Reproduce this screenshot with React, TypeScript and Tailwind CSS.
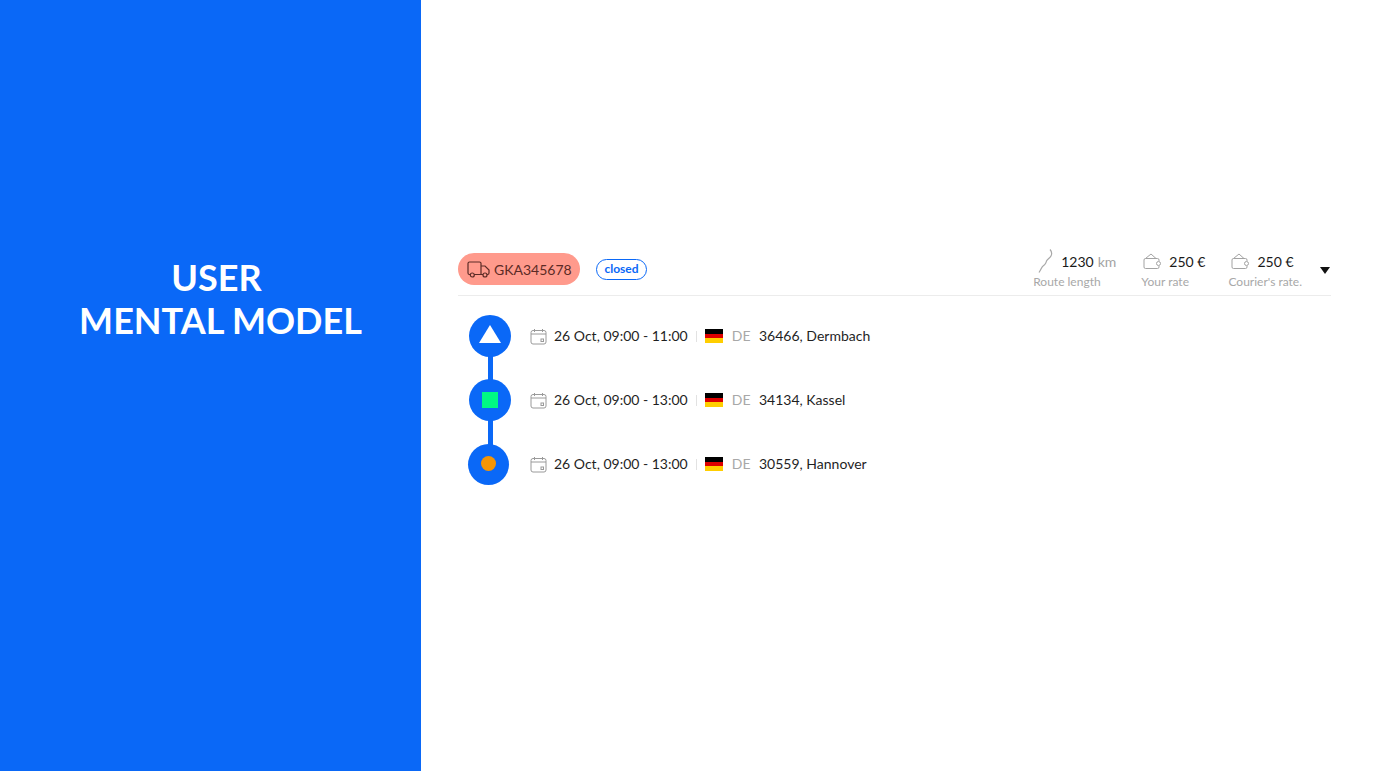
import React from "react";

const stops = [
  { time: "26 Oct, 09:00 - 11:00", city: "36466, Dermbach", shape: "triangle" },
  { time: "26 Oct, 09:00 - 13:00", city: "34134, Kassel", shape: "square" },
  { time: "26 Oct, 09:00 - 13:00", city: "30559, Hannover", shape: "dot" },
];

function CalendarIcon() {
  return (
    <svg className="mt-[2px]" width="17" height="17" viewBox="0 0 17 17" fill="none" stroke="#9a9a9a" strokeWidth="1">
      <rect x="1" y="2.5" width="15" height="13.5" rx="2" />
      <path d="M1 6h15M4.5 1v3M12.5 1v3" />
      <rect x="11" y="11" width="2.5" height="2.5" />
    </svg>
  );
}

function WalletIcon() {
  return (
    <svg width="19" height="17" viewBox="0 0 19 17" fill="none" stroke="#a3a3a3" strokeWidth="1">
      <path d="M2.5 5.500 8 1l5 4.500" />
      <path d="M16 8V7A1.500 1.500 0 0 0 14.500 5.500h-12A1.500 1.500 0 0 0 1 7v7a1.500 1.500 0 0 0 1.500 1.500h12A1.500 1.500 0 0 0 16 14v-1" />
      <circle cx="15.500" cy="10.500" r="2" />
    </svg>
  );
}

function TruckIcon() {
  return (
    <svg width="23" height="17" viewBox="0 0 23 17" fill="none" stroke="#5c2b26" strokeWidth="1.2">
      <path d="M3.500 13.500H2.500A1.500 1.500 0 0 1 1 12V2.500A1.500 1.500 0 0 1 2.500 1h10A1.500 1.500 0 0 1 14 2.500v11H7" />
      <path d="M14 5h4l4 4v3a1.500 1.500 0 0 1-1.500 1.500H20M16 13.500h-2" />
      <circle cx="5.300" cy="14" r="2" />
      <circle cx="18" cy="14" r="2" />
    </svg>
  );
}

function RouteIcon() {
  return (
    <svg width="16" height="25" viewBox="0 0 16 25" fill="none" stroke="#a8a8a8" strokeWidth="1.2">
      <path d="M13 0.500c1.800 2 2 4.500 1 6.500-1 2-3.500 3-4.500 5-0.500 1.500-0.500 2.500-2 3.800-1.500 1-2.800 2.500-3.500 4.200-0.500 1.200-1.200 2.300-2 3.500" />
    </svg>
  );
}

function StopMarker({ shape }: { shape: string }) {
  if (shape === "triangle") {
    return <div className="mb-[4px] h-0 w-0 border-x-[11.500px] border-b-[18px] border-x-transparent border-b-white" />;
  }
  if (shape === "square") {
    return <div className="h-[16px] w-[16px] bg-[#00f884]" />;
  }
  return <div className="mb-px h-[15px] w-[15px] rounded-full bg-[#f59505]" />;
}

export default function App() {
  return (
    <div className="flex h-[771px] w-[1388px] overflow-hidden bg-white font-['Lato','Open_Sans',sans-serif]">
      <div className="flex w-[421px] shrink-0 items-center justify-center bg-[#0a68f7] pb-[174px] pl-[20px]">
        <h1 className="text-center text-[36px] font-bold leading-[43px] text-white">
          <span className="mr-[8px]">USER</span>
          <br />
          MENTAL MODEL
        </h1>
      </div>

      <div className="flex-1 pl-[37px] pr-[57px] pt-[247px]">
        <div className="flex h-[49px] items-center justify-between border-b border-[#ececec] pb-[4px]">
          <div className="flex items-center">
            <div className="flex h-[32px] w-[122px] items-center gap-[4px] rounded-full bg-[#ff9a8c] pl-[9px] text-[14px] text-[#5c2b26]">
              <TruckIcon />
              <span>GKA345678</span>
            </div>
            <div className="ml-[16px] flex h-[21px] w-[51px] items-center justify-center rounded-full border border-[#0a68f7] text-[12px] font-bold text-[#0a68f7]">
              closed
            </div>
          </div>
          <div className="flex items-start gap-[24px]">
            <div className="mr-px flex flex-col">
              <div className="flex h-[25px] items-center pl-[4px] text-[14px] text-[#1a1a1a]">
                <RouteIcon />
                <span className="ml-[8px]">1230</span>
                <span className="ml-[4px] text-[#a3a3a3]">km</span>
              </div>
              <span className="text-[12px] leading-[15px] text-[#a8a8a8]">Route length</span>
            </div>
            <div className="-mr-px flex flex-col">
              <div className="flex h-[25px] items-center pl-[2px] text-[14px] text-[#1a1a1a]">
                <WalletIcon />
                <span className="ml-[7px]">250 €</span>
              </div>
              <span className="text-[12px] leading-[15px] text-[#a8a8a8]">Your rate</span>
            </div>
            <div className="flex flex-col">
              <div className="flex h-[25px] items-center pl-[3px] text-[14px] text-[#1a1a1a]">
                <WalletIcon />
                <span className="ml-[7px]">250 €</span>
              </div>
              <span className="text-[12px] leading-[15px] text-[#a8a8a8]">Courier's rate.</span>
            </div>
            <div className="-ml-[6px] mr-px mt-[18px] h-0 w-0 border-x-[5px] border-t-[7px] border-x-transparent border-t-[#111]" />
          </div>
        </div>

        <div className="mt-[8px] flex flex-col">
          {stops.map((stop, i) => (
            <div key={i} className="relative flex h-[64px] items-center pl-[10px]">
              {i < 2 && <div className="absolute left-[29.500px] top-[50px] h-[30px] w-[5px] bg-[#0a68f7]" />}
              <div className="flex w-[43px] shrink-0 justify-end">
                <div
                  className={
                    i === 2
                      ? "relative mr-[2px] flex h-[41px] w-[41px] items-center justify-center rounded-full bg-[#0a68f7]"
                      : "relative flex h-[42px] w-[42px] items-center justify-center rounded-full bg-[#0a68f7]"
                  }
                >
                  <StopMarker shape={stop.shape} />
                </div>
              </div>
              <div className="mb-[2px] ml-[19px] flex items-center text-[14px] text-[#1f1f1f]">
                <CalendarIcon />
                <span className="ml-[7px]">{stop.time}</span>
                <div className="ml-[8px] mt-[2px] h-[11px] w-px bg-[#e2e2e2]" />
                <div className="ml-[8px] mt-[2px] flex h-[14px] w-[18px] flex-col">
                  <div className="flex-1 bg-black" />
                  <div className="flex-1 bg-[#dd0000]" />
                  <div className="flex-1 bg-[#ffce00]" />
                </div>
                <span className="ml-[9px] text-[#a8a8a8]">DE</span>
                <span className="ml-[8.500px]">{stop.city}</span>
              </div>
            </div>
          ))}
        </div>
      </div>
    </div>
  );
}
